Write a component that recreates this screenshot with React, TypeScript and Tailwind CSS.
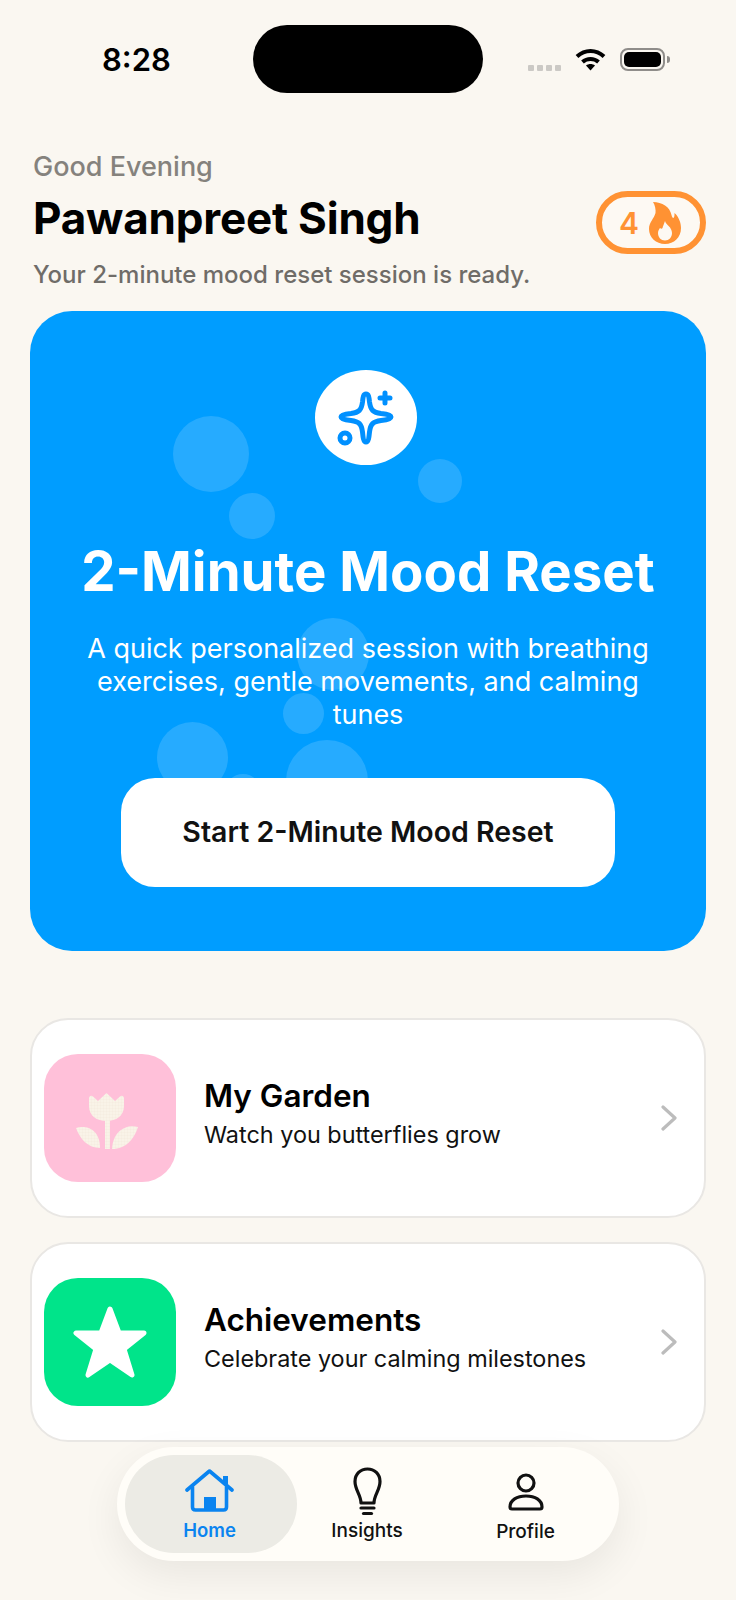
import React from 'react';

const sans = { fontFamily: 'Inter, "Liberation Sans", sans-serif' };

const StatusBar = () => (
	<div className="flex items-start h-[93px] pt-[25px] pl-[72px]">
		<span className="w-[151px] mt-[16px] text-[31px] leading-[38px] font-semibold text-black">8:28</span>
		<div className="w-[230px] h-[68px] rounded-[34px] bg-black" />
		<div className="flex ml-[45px] mt-[23px] items-start">
			<div className="flex gap-[3px] mt-[17px]">
				<span className="w-[6px] h-[6px] rounded-[1px] bg-[#cbc9c5]" />
				<span className="w-[6px] h-[6px] rounded-[1px] bg-[#cbc9c5]" />
				<span className="w-[6px] h-[6px] rounded-[1px] bg-[#cbc9c5]" />
				<span className="w-[6px] h-[6px] rounded-[1px] bg-[#cbc9c5]" />
			</div>
			<svg viewBox="0 0 31 23" className="w-[31px] h-[23px] ml-[14px]" fill="none" stroke="#000" strokeWidth={4}>
				<path d="M2 8.5C10 1 21 1 29 8.5" />
				<path d="M7.5 14C12 10 19 10 23.5 14" />
				<path d="M11 17.5L15.5 22.5L20 17.5C17.5 15.5 13.5 15.5 11 17.5Z" fill="#000" stroke="none" />
			</svg>
			<div className="ml-[14px] w-[45px] h-[23px] rounded-[8px] border-2 border-[#8f8d8a] p-[2px]">
				<div className="w-full h-full rounded-[5px] bg-black" />
			</div>
			<span className="mt-[8px] ml-[2px] w-[3px] h-[7px] rounded-r-full bg-[#8f8d8a]" />
		</div>
	</div>
);

const Flame = () => (
	<svg viewBox="0 0 32 42" className="w-[32px] h-[42px] ml-[10px]">
		<path d="M4 0C13 0 21 5 22.5 13C23 15 23.5 16 24.5 16C25.5 15 25.5 13 25.5 11C30 15 32 21 32 26C32 35.5 25 42 16 42C7 42 0 35.5 0 27C0 20 5 17 6.5 11C7 8 6 3 4 0Z" fill="#ff9233" />
		<path d="M16 19C17 23 23 25 23 31C23 35.5 20 38.5 16 38.5C12 38.5 9 35.5 9 31C9 29 10 27 11 26C12 27 13 27 13.5 26C14 24 15 22 16 19Z" fill="#fdf9f3" />
	</svg>
);

const Greeting = () => (
	<div className="flex justify-between items-start mt-[58px]">
		<div className="pl-[3px]">
			<p className="text-[27px] leading-[32px] font-medium text-[#85827d]">Good Evening</p>
			<h1 className="mt-[10px] text-[44px] leading-[50px] font-bold tracking-[-0.2px] text-black">Pawanpreet Singh</h1>
			<p className="mt-[17px] text-[24px] leading-[30px] font-medium text-[#6f6c68]">Your 2-minute mood reset session is ready.</p>
		</div>
		<div className="mt-[40px] flex items-center justify-center w-[110px] h-[63px] pr-[2px] rounded-[32px] border-[6px] border-[#ff9233] bg-[#fdf9f3]">
			<span className="text-[30px] leading-none font-semibold text-[#ff9233]">4</span>
			<Flame />
		</div>
	</div>
);

const SparkleBadge = () => (
	<div className="w-[102px] h-[95px] -ml-[4px] rounded-[50%] bg-white">
		<svg viewBox="0 0 102 95" className="w-full h-full" fill="none" stroke="#0090ff" strokeWidth={5} strokeLinejoin="round" strokeLinecap="round">
			<path d="M51 24C53.5 24 54 27 54.5 32C55.5 40 58 42.5 66 43.5C71 44 76 45 76 47C76 49 71 50 66 50.5C58 51.5 55.5 54 54.5 62C54 67 53.5 72 51 72C48.5 72 48 67 47.5 62C46.5 54 44 51.5 36 50.5C31 50 26 49 26 47C26 45 31 44 36 43.5C44 42.5 46.5 40 47.5 32C48 27 48.5 24 51 24Z" />
			<path d="M70 23V33M65 28H75" />
			<circle cx="30" cy="68" r="5" />
		</svg>
	</div>
);

const HeroCard = () => (
	<div className="relative mt-[21px] h-[640px] rounded-[42px] bg-[#009dff] overflow-hidden flex flex-col items-center pt-[59px] text-white">
		{/* soft bubbles behind the copy */}
		<span className="absolute left-[143px] top-[105px] w-[76px] h-[76px] rounded-full bg-white/15" />
		<span className="absolute left-[199px] top-[182px] w-[46px] h-[46px] rounded-full bg-white/15" />
		<span className="absolute left-[388px] top-[148px] w-[44px] h-[44px] rounded-full bg-white/15" />
		<span className="absolute left-[267px] top-[307px] w-[72px] h-[72px] rounded-full bg-white/15" />
		<span className="absolute left-[253px] top-[382px] w-[41px] h-[41px] rounded-full bg-white/15" />
		<span className="absolute left-[127px] top-[411px] w-[71px] h-[71px] rounded-full bg-white/15" />
		<span className="absolute left-[256px] top-[429px] w-[82px] h-[82px] rounded-full bg-white/15" />
		<span className="absolute left-[195px] top-[463px] w-[36px] h-[36px] rounded-full bg-white/15" />

		<div className="relative flex flex-col items-center">
			<SparkleBadge />
			<h2 className="mt-[74px] text-[54.5px] leading-[64px] font-bold whitespace-nowrap">2-Minute Mood Reset</h2>
			<p className="mt-[29px] w-[600px] text-center text-[27px] leading-[33px]">
				A quick personalized session with breathing exercises, gentle movements, and calming tunes
			</p>
			<button className="mt-[47px] w-[494px] h-[109px] rounded-[34px] bg-white text-[28.5px] font-semibold text-[#111]">
				Start 2-Minute Mood Reset
			</button>
		</div>
	</div>
);

const Chevron = () => (
	<svg viewBox="0 0 18 26" className="w-[18px] h-[26px] ml-auto mr-[26px]" fill="none" stroke="#bcbcbc" strokeWidth={3.2} strokeLinecap="round" strokeLinejoin="round">
		<path d="M3 2L15 13L3 24" />
	</svg>
);

const Tulip = () => (
	<svg viewBox="0 0 62 56" className="w-[62px] h-[56px] mr-[6px] mt-[6px]">
		<defs>
			<pattern id="weave" width="3" height="3" patternUnits="userSpaceOnUse">
				<rect width="3" height="3" fill="#f9f3e8" />
				<path d="M0 0H3M0 0V3" stroke="#f1e7d9" strokeWidth={0.6} />
			</pattern>
		</defs>
		<g fill="url(#weave)">
			<path d="M13 6C13 3 15 2 17 3.5L22 8L30.5 0L39 8L44 3.5C46 2 48 3 48 6V13C48 23 40 28 30.5 28C21 28 13 23 13 13Z" />
			<rect x="29" y="27" width="5" height="29" />
			<path d="M0 35C10 32 24 36 24 55C12 55 4 46 0 35Z" />
			<path d="M62 34C50 31 37 38 36 56C50 56 58 46 62 34Z" />
		</g>
	</svg>
);

const Star = () => (
	<svg viewBox="0 0 74 72" className="w-[74px] h-[72px]" fill="#fff" stroke="#fff" strokeWidth={5} strokeLinejoin="round">
		<path d="M37 3L46 27L71 27L51 43L59 69L37 54L15 69L23 43L3 27L28 27Z" />
	</svg>
);

const Row = ({ icon, iconBg, title, sub }: { icon: React.ReactNode; iconBg: string; title: string; sub: string }) => (
	<div className="h-[200px] rounded-[38px] border-2 border-[#e9e7e4] bg-white flex items-center pl-[12px]">
		<div className={`w-[132px] h-[128px] rounded-[34px] flex items-center justify-center ${iconBg}`}>{icon}</div>
		<div className="ml-[28px] pb-[11px]">
			<p className="text-[31.5px] leading-[40px] font-semibold text-black">{title}</p>
			<p className="mt-[4px] text-[23.4px] leading-[30px] text-[#111]">{sub}</p>
		</div>
		<Chevron />
	</div>
);

const TabBar = () => (
	<nav className="absolute left-[117px] top-[1447px] w-[502px] h-[114px] p-[8px] rounded-[57px] bg-[#fffdf8] flex shadow-[0_14px_40px_rgba(0,0,0,0.07)]">
		<div className="w-[172px] h-[98px] shrink-0 rounded-[49px] bg-[#ecebe5] flex flex-col items-center pt-[14px]">
			<svg viewBox="0 0 49 44" className="w-[49px] h-[44px] -ml-[3px]" fill="none" stroke="#0a84f0" strokeWidth={3.6} strokeLinecap="round" strokeLinejoin="round">
				<path d="M2 21L24.5 2L47 21" />
				<path d="M7.5 18V38C7.5 40 8.5 41 10.5 41H38.5C40.5 41 41.5 40 41.5 38V18" />
				<path d="M40.5 7V15" strokeWidth={5} strokeLinecap="butt" />
				<rect x="19" y="28" width="12" height="13" fill="#0a84f0" stroke="none" />
			</svg>
			<span className="mt-[5px] -ml-[3px] text-[18.5px] leading-[24px] font-semibold text-[#0a84f0]">Home</span>
		</div>
		<div className="w-[140px] shrink-0 flex flex-col items-center pt-[12px]">
			<svg viewBox="0 0 29 49" className="w-[29px] h-[49px]" fill="none" stroke="#111" strokeWidth={3.2} strokeLinecap="round" strokeLinejoin="round">
				<path d="M8 36C8 28 2 23 2 14.5C2 7 7.5 2 14.5 2C21.5 2 27 7 27 14.5C27 23 21 28 21 36Z" />
				<path d="M8 41H21" />
				<path d="M10.5 46.5H18.5" />
			</svg>
			<span className="mt-[3px] text-[19px] leading-[24px] font-medium text-[#111]">Insights</span>
		</div>
		<div className="w-[177px] shrink-0 flex flex-col items-center pt-[18px]">
			<svg viewBox="0 0 36 38" className="w-[36px] h-[38px]" fill="none" stroke="#111" strokeWidth={3.2} strokeLinecap="round" strokeLinejoin="round">
				<circle cx="18" cy="10" r="8" />
				<path d="M2 34C2 27 9 23 18 23C27 23 34 27 34 34C34 35.5 33.5 36 32 36H4C2.5 36 2 35.5 2 34Z" />
			</svg>
			<span className="mt-[9px] text-[19px] leading-[24px] font-medium text-[#111]">Profile</span>
		</div>
	</nav>
);

const App = () => {
	return (
		<div style={sans} className="relative w-[736px] h-[1600px] overflow-hidden bg-[#faf7f1] px-[30px]">
			<StatusBar />
			<Greeting />
			<HeroCard />
			<div className="mt-[67px] flex flex-col gap-[24px]">
				<Row icon={<Tulip />} iconBg="bg-[#ffc0d9]" title="My Garden" sub="Watch you butterflies grow" />
				<Row icon={<Star />} iconBg="bg-[#00e48a]" title="Achievements" sub="Celebrate your calming milestones" />
			</div>
			<TabBar />
		</div>
	);
};

export default App;
